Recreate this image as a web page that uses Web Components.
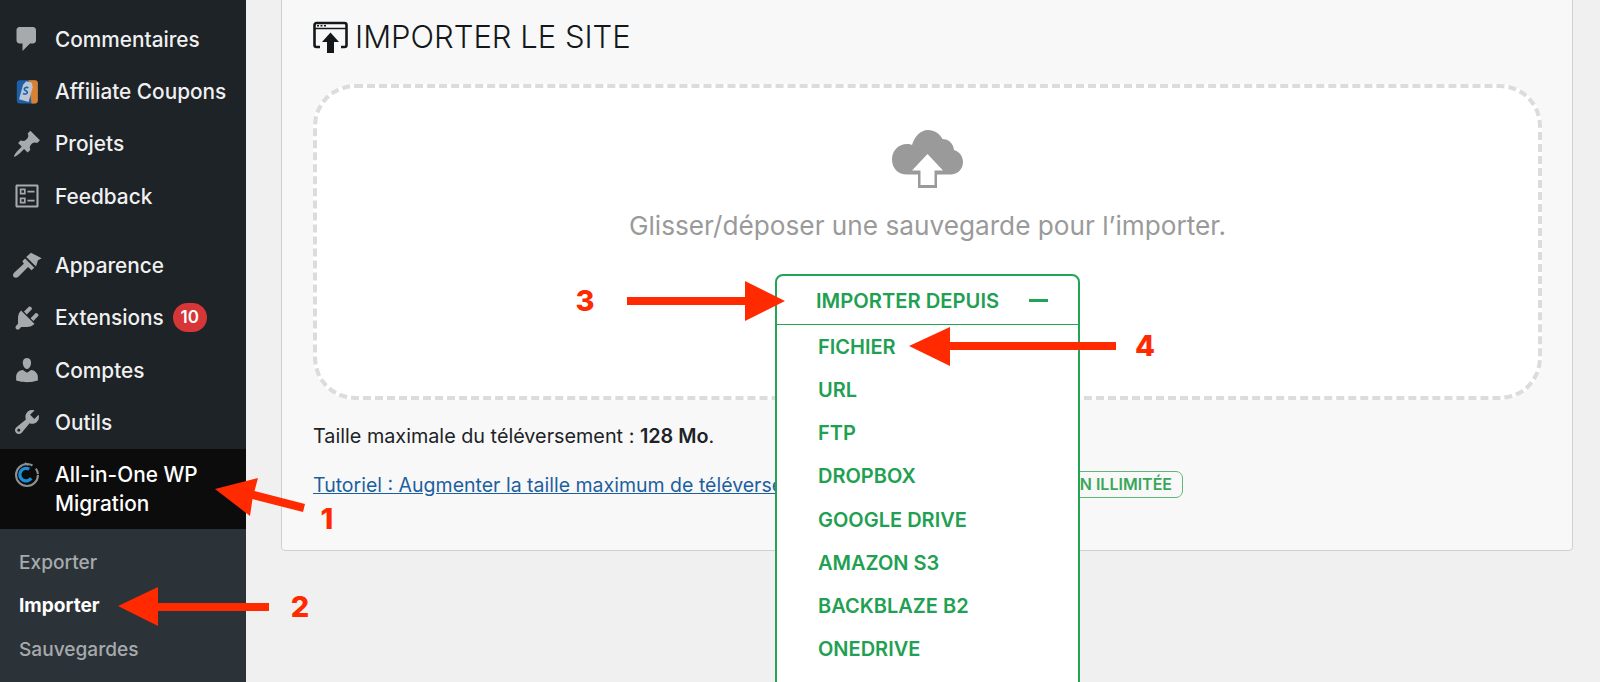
<!DOCTYPE html>
<html lang="fr">
<head>
<meta charset="utf-8">
<title>Importer le site</title>
<style>
  html, body { margin: 0; height: 682px; overflow: hidden; background: #f0f0f1; }
  body { font-family: Inter, "Noto Sans", sans-serif; }
</style>
</head>
<body>
<wp-page>
  <wp-sidebar slot="side">
    <wp-menu-item icon="comment">Commentaires</wp-menu-item>
    <wp-menu-item icon="coupon">Affiliate Coupons</wp-menu-item>
    <wp-menu-item icon="pin">Projets</wp-menu-item>
    <wp-menu-item icon="feedback">Feedback</wp-menu-item>
    <wp-menu-item icon="brush" class="first">Apparence</wp-menu-item>
    <wp-menu-item icon="plug" badge="10">Extensions</wp-menu-item>
    <wp-menu-item icon="user">Comptes</wp-menu-item>
    <wp-menu-item icon="wrench">Outils</wp-menu-item>
    <wp-menu-item icon="aio" current>All-in-One WP Migration</wp-menu-item>
    <wp-submenu>
      <span>Exporter</span>
      <b>Importer</b>
      <span>Sauvegardes</span>
    </wp-submenu>
  </wp-sidebar>
  <import-card></import-card>
  <import-dropdown>
    <span>FICHIER</span>
    <span>URL</span>
    <span>FTP</span>
    <span>DROPBOX</span>
    <span>GOOGLE DRIVE</span>
    <span>AMAZON S3</span>
    <span>BACKBLAZE B2</span>
    <span>ONEDRIVE</span>
  </import-dropdown>
  <red-arrows></red-arrows>
</wp-page>

<script>
const ICONS = {
  comment: '<path d="M5 2h9c1.1 0 2 .9 2 2v7c0 1.1-.9 2-2 2h-2l-5 5v-5H5c-1.1 0-2-.9-2-2V4c0-1.1.9-2 2-2z"/>',
  pin: '<path d="M10.44 3.02l1.82-1.82 6.36 6.35-1.83 1.82c-1.05-.68-2.48-.57-3.41.36l-.75.75c-.92.93-1.04 2.35-.35 3.41l-1.83 1.82-2.41-2.41-2.8 2.79c-.42.42-3.38 2.71-3.8 2.29s1.86-3.39 2.28-3.81l2.79-2.79L4.1 9.36l1.83-1.82c1.05.69 2.48.57 3.4-.36l.75-.75c.93-.92 1.05-2.35.36-3.41z"/>',
  brush: '<path d="M12.600 1.800L19.800 5.500 17.300 6.900 16 11 9.500 4.700z"/><path d="M8.700 5.700L14.900 11.800 13 13.500 10.700 11.300 4.200 17.800c-.9.900-2.300.900-3 .2-.7-.7-.7-2 .2-2.900L7.900 9.200 6.900 7.500z"/>',
  plug: '<path d="M13.11 4.36L9.87 7.6 8 5.73l3.24-3.24c.35-.34 1.05-.2 1.56.32.52.51.66 1.21.31 1.55zm-8 1.77l.91-1.12 9.01 9.01-1.19.84c-.71.71-2.63 1.16-3.82 1.16H6.14L4.9 17.26c-.59.59-1.54.59-2.12 0-.59-.58-.59-1.53 0-2.12l1.24-1.24v-3.88c0-1.13.4-3.19 1.09-3.89zm7.26 3.97l3.24-3.24c.34-.35 1.04-.21 1.55.31.52.51.66 1.21.31 1.55l-3.24 3.25z"/>',
  user: '<path d="M10 9.25c-2.27 0-2.73-3.44-2.73-3.44C7 4.02 7.82 2 9.97 2c2.16 0 2.98 2.02 2.71 3.81 0 0-.41 3.44-2.68 3.44zm0 2.57L12.72 10c2.39 0 4.52 2.33 4.52 4.53v2.49s-3.65 1.13-7.24 1.13c-3.65 0-7.24-1.13-7.24-1.13v-2.49c0-2.25 1.94-4.48 4.47-4.48z"/>',
  wrench: '<path d="M16.68 9.77c-1.34 1.34-3.3 1.67-4.95.99l-5.41 6.52c-.99.99-2.59.99-3.58 0s-.99-2.59 0-3.57l6.52-5.42c-.68-1.65-.35-3.61.99-4.95 1.28-1.28 3.12-1.62 4.72-1.06l-2.89 2.89 2.82 2.82 2.86-2.87c.53 1.58.18 3.39-1.08 4.65zM3.81 16.21c.4.39 1.04.39 1.43 0 .4-.4.4-1.04 0-1.43-.39-.4-1.03-.4-1.43 0-.39.39-.39 1.03 0 1.43z"/>',
  feedback: '<path fill-rule="evenodd" d="M3.300 2.300h13.400c.6 0 1 .4 1 1v13.400c0 .6-.4 1-1 1H3.300c-.6 0-1-.4-1-1V3.300c0-.6.4-1 1-1zm.4 1.400v12.600h12.600V3.700zM5.200 5h3.900v4H5.200zm1.100 1.100v1.800h1.700V6.100zM5.200 11h3.900v4H5.200zm1.100 1.100v1.800h1.700v-1.800zM10.300 6.500h4.700v1.200h-4.700zM10.300 12.500h4.700v1.200h-4.700z"/>',
  coupon: '<rect x="3.200" y="2.200" width="14" height="15.500" rx="2" fill="#1f5fa8"/><path d="M11 2.200h4.200a2 2 0 0 1 2 2v11.500a2 2 0 0 1-2 2H13z" fill="#d9812f"/><path d="M9.500 2.800l3.700 1.100.6 3-2.700 9.800-6.400-1.800 2.700-9.700z" fill="#b9c6d6"/><path d="M10.900 7.300c-.9-.7-2.500-.4-2.700.6-.3 1.400 2.300 1.100 2 2.500-.2 1-1.800 1.300-2.800.5" fill="none" stroke="#1f5fa8" stroke-width="1.100"/>',
  aio: '<circle cx="10" cy="10" r="7.300" fill="none" stroke="#8c8f94" stroke-width="1.400" stroke-dasharray="38 3 4 1"/><path d="M12.800 12.200A4.200 4.200 0 1 1 11.500 6.100" fill="none" stroke="#1a8fd8" stroke-width="2.200"/><path d="M11 3.400l-2.400-1.300" stroke="#8c8f94" stroke-width="1.300"/>'
};

class WpPage extends HTMLElement {
  connectedCallback() {
    this.attachShadow({ mode: 'open' }).innerHTML = `
      <style>
        :host { display: flex; position: relative; width: 1600px; height: 682px; overflow: hidden; background: #f0f0f1; }
        .content { flex: 1; padding-left: 35px; padding-right: 28px; }
      </style>
      <slot name="side"></slot>
      <div class="content"><slot></slot></div>
    `;
  }
}

class WpSidebar extends HTMLElement {
  connectedCallback() {
    this.attachShadow({ mode: 'open' }).innerHTML = `
      <style>
        :host { display: block; flex: none; width: 246px; height: 682px; padding-top: 13px; box-sizing: border-box; background: #1d2327; overflow: hidden; }
      </style>
      <slot></slot>
    `;
  }
}

class WpMenuItem extends HTMLElement {
  connectedCallback() {
    const icon = this.getAttribute('icon');
    const badge = this.getAttribute('badge');
    this.attachShadow({ mode: 'open' }).innerHTML = `
      <style>
        :host { display: flex; align-items: center; height: 52.4px; padding-left: 12px; color: #f0f0f1; font-size: 20.800px; font-weight: 500; line-height: 29px; }
        :host(.first) { margin-top: 16.500px; }
        :host([current]) { align-items: flex-start; box-sizing: border-box; height: 80.500px; padding-top: 11px; padding-right: 8px; background: #0c0c0c; color: #fff; }
        svg { flex: none; width: 30px; height: 30px; fill: #a7aaad; margin-right: 13px; }
        .badge { flex: none; display: inline-block; width: 34px; height: 29px; margin-left: 9px; border-radius: 15px; background: #d63638; color: #fff; font-size: 17px; font-weight: 600; line-height: 29px; text-align: center; }
      </style>
      <svg viewBox="0 0 20 20">${ICONS[icon]}</svg>
      <span><slot></slot></span>
      ${badge ? `<span class="badge">${badge}</span>` : ''}
    `;
  }
}

class WpSubmenu extends HTMLElement {
  connectedCallback() {
    this.attachShadow({ mode: 'open' }).innerHTML = `
      <style>
        :host { display: block; height: 160px; padding: 12px 0 0 19px; box-sizing: border-box; background: #2c3338; }
        ::slotted(*) { display: block; height: 43.200px; line-height: 43px; font-size: 19.100px; color: #a7aaad; font-weight: 500; }
        ::slotted(b) { color: #fff; font-weight: 700; }
      </style>
      <slot></slot>
    `;
  }
}

class ImportCard extends HTMLElement {
  connectedCallback() {
    this.attachShadow({ mode: 'open' }).innerHTML = `
      <style>
        :host { display: block; box-sizing: border-box; width: 1292px; height: 552px; margin-top: -1px; padding: 0 30px 0 31px; background: #f8f8f8; border: 1px solid #d0d0d0; border-radius: 0 0 4px 4px; color: #1d2327; }
        h1 { display: flex; align-items: center; height: 74px; margin: 0; font-size: 31px; font-weight: 300; line-height: 74px; color: #14181b; }
        h1 svg { width: 35px; height: 33px; margin-right: 7px; }
        .drop { box-sizing: border-box; height: 316px; margin-top: 10px; padding-top: 42px; background: #fff; border: 4px dashed #dcdcdc; border-radius: 42px; text-align: center; }
        .drop svg { display: block; width: 71px; height: 58px; margin: 0 auto; }
        .drop p { margin: 22px 0 0; font-size: 26.200px; line-height: 32px; color: #9a9a9a; }
        .size { margin: 22px 0 0; font-size: 19.800px; line-height: 28px; }
        .size b { font-weight: 600; }
        .row { display: flex; align-items: center; margin-top: 21px; height: 27px; white-space: nowrap; }
        a { color: #1d5f9e; font-size: 19.500px; text-decoration: underline; }
        .ver { box-sizing: border-box; margin-left: auto; margin-right: 359px; height: 27px; padding: 0 10px; border: 1px solid #5fb878; border-radius: 7px; color: #3aa65a; font-size: 16px; font-weight: 600; line-height: 25px; }
      </style>
      <h1>
        <svg viewBox="0 0 35 33">
          <path d="M7 26H3.500a2 2 0 0 1-2-2V4a2 2 0 0 1 2-2h28a2 2 0 0 1 2 2v20a2 2 0 0 1-2 2H28" fill="none" stroke="#14181b" stroke-width="2.600"/>
          <path d="M2 7.500h31" stroke="#14181b" stroke-width="1.500"/>
          <path d="M4 4.800h2M7.500 4.800h2M11 4.800h2" stroke="#14181b" stroke-width="1.400"/>
          <path d="M17.500 11.500L26 21h-5v11h-7V21H9z" fill="#14181b"/>
        </svg>
        IMPORTER LE SITE
      </h1>
      <div class="drop">
        <svg viewBox="0 0 71 58">
          <path d="M15 44.500C6.500 44.500 0 38.500 0 29.500 0 20.500 6.500 14 15 14c2 0 3.500.3 5 1C22.500 6.500 28.500 0 36 0c6.500 0 11.500 3.500 14.500 9 6 0 11 4.500 11.500 11 5.500 1.500 9 6.500 9 12 0 7-5.500 12.500-12.500 12.500z" fill="#9a9a9a"/>
          <path d="M26 38h19v20H26z" fill="#9a9a9a"/>
          <path d="M35.500 24L51 40.500H42.500V55h-14V40.500H20z" fill="#fff"/>
        </svg>
        <p>Glisser/déposer une sauvegarde pour l’importer.</p>
      </div>
      <p class="size">Taille maximale du téléversement : <b>128 Mo</b>.</p>
      <div class="row">
        <a>Tutoriel : Augmenter la taille maximum de téléversement</a>
        <span class="ver">VERSION ILLIMITÉE</span>
      </div>
    `;
  }
}

class ImportDropdown extends HTMLElement {
  connectedCallback() {
    this.attachShadow({ mode: 'open' }).innerHTML = `
      <style>
        :host { position: absolute; left: 775px; top: 274px; box-sizing: border-box; width: 305px; height: 420px; background: #fff; border: 2.500px solid #23a455; border-radius: 8px 8px 0 0; color: #1fa052; font-size: 20px; font-weight: 600; }
        .head { display: flex; align-items: center; justify-content: space-between; box-sizing: border-box; height: 49px; padding: 0 30px 0 39px; border-bottom: 1px solid #23a455; font-size: 20.200px; }
        .head i { display: block; width: 19px; height: 3px; background: #23a455; }
        .list { padding: 1px 0 0 41px; }
        ::slotted(span) { display: block; height: 43.150px; line-height: 43px; }
      </style>
      <div class="head">IMPORTER DEPUIS<i></i></div>
      <div class="list"><slot></slot></div>
    `;
  }
}

class RedArrows extends HTMLElement {
  connectedCallback() {
    this.attachShadow({ mode: 'open' }).innerHTML = `
      <style>
        :host { position: absolute; inset: 0; pointer-events: none; }
        svg { position: absolute; left: 0; top: 0; width: 1600px; height: 682px; }
        span { position: absolute; transform: translate(-50%, -50%); color: #ff2a00; font-size: 29px; font-weight: 800; line-height: 1; }
      </style>
      <svg viewBox="0 0 1600 682" fill="#ff2a00">
        <path d="M215 489L258 478 254.500 491 305 504 303 512 252.500 499 250 516z"/>
        <path d="M118 606L158 587V603H269V611H158V626z"/>
        <path d="M785 301L745 281V297H627V305H745V321z"/>
        <path d="M909 346L950 327V342H1116V350H950V366z"/>
      </svg>
      <span style="left:327px;top:518px">1</span>
      <span style="left:300px;top:606px">2</span>
      <span style="left:585px;top:300px">3</span>
      <span style="left:1145px;top:345px">4</span>
    `;
  }
}

customElements.define('wp-page', WpPage);
customElements.define('wp-sidebar', WpSidebar);
customElements.define('wp-menu-item', WpMenuItem);
customElements.define('wp-submenu', WpSubmenu);
customElements.define('import-card', ImportCard);
customElements.define('import-dropdown', ImportDropdown);
customElements.define('red-arrows', RedArrows);
</script>
</body>
</html>
